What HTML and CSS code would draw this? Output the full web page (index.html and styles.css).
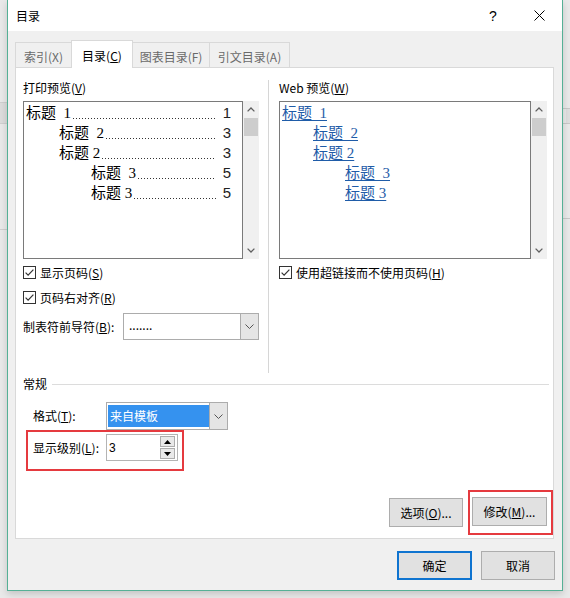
FILE: index.html
```html
<!DOCTYPE html>
<html lang="zh-CN">
<head>
<meta charset="utf-8">
<title>目录</title>
<link rel="stylesheet" href="styles.css">
</head>
<body>
<div class="dialog">
  <div class="titlebar">
    <span class="title">目录</span>
    <span class="cap help">?</span>
    <span class="cap close"><svg width="11" height="11" viewBox="0 0 11 11"><path d="M0.5 0.5L10.5 10.5M10.5 0.5L0.5 10.5" stroke="#000" stroke-width="1" fill="none"/></svg></span>
  </div>
  <div class="body">
    <div class="tabs">
      <div class="tab t1">索引(X)</div>
      <div class="tab t2 active">目录(<u>C</u>)</div>
      <div class="tab t3">图表目录(F)</div>
      <div class="tab t4">引文目录(A)</div>
    </div>
    <div class="panel">
      <div class="top">
        <div class="col left">
          <div class="label">打印预览(<u>V</u>)</div>
          <div class="preview">
            <div class="pbox">
              <div class="toc l1"><span class="t">标题  1</span><span class="dots"></span><span class="pg">1</span></div>
              <div class="toc l2"><span class="t">标题  2</span><span class="dots"></span><span class="pg">3</span></div>
              <div class="toc l2"><span class="t">标题 2</span><span class="dots"></span><span class="pg">3</span></div>
              <div class="toc l3"><span class="t">标题  3</span><span class="dots"></span><span class="pg">5</span></div>
              <div class="toc l3"><span class="t">标题 3</span><span class="dots"></span><span class="pg">5</span></div>
            </div>
            <div class="scroll">
              <div class="arrow"><svg width="8" height="5" viewBox="0 0 8 5"><path d="M0.6 4.4L4 1L7.4 4.4" fill="none" stroke="#606060" stroke-width="1.3"/></svg></div>
              <div class="thumb"></div>
              <div class="track"></div>
              <div class="arrow"><svg width="8" height="5" viewBox="0 0 8 5"><path d="M0.6 0.6L4 4L7.4 0.6" fill="none" stroke="#606060" stroke-width="1.3"/></svg></div>
            </div>
          </div>
          <div class="check first"><svg class="cb" width="13" height="13" viewBox="0 0 13 13"><rect x="0.5" y="0.5" width="12" height="12" fill="#fff" stroke="#333"/><path d="M2.6 6.6L5.1 9.1L10.4 3.6" fill="none" stroke="#333" stroke-width="1.2"/></svg><span>显示页码(<u>S</u>)</span></div>
          <div class="check"><svg class="cb" width="13" height="13" viewBox="0 0 13 13"><rect x="0.5" y="0.5" width="12" height="12" fill="#fff" stroke="#333"/><path d="M2.6 6.6L5.1 9.1L10.4 3.6" fill="none" stroke="#333" stroke-width="1.2"/></svg><span>页码右对齐(<u>R</u>)</span></div>
          <div class="leader">
            <span class="leader-label">制表符前导符(<u>B</u>):</span>
            <div class="combo leader-combo">
              <span class="value">.......</span>
              <span class="drop"><svg width="9" height="5" viewBox="0 0 9 5"><path d="M0.5 0.5L4.5 4.5L8.5 0.5" fill="none" stroke="#555" stroke-width="1"/></svg></span>
            </div>
          </div>
        </div>
        <div class="divider"></div>
        <div class="col right">
          <div class="label">Web 预览(<u>W</u>)</div>
          <div class="preview">
            <div class="pbox web">
              <div class="link l1"><span>标题  1</span></div>
              <div class="link l2"><span>标题  2</span></div>
              <div class="link l2"><span>标题 2</span></div>
              <div class="link l3"><span>标题  3</span></div>
              <div class="link l3"><span>标题 3</span></div>
            </div>
            <div class="scroll">
              <div class="arrow"><svg width="8" height="5" viewBox="0 0 8 5"><path d="M0.6 4.4L4 1L7.4 4.4" fill="none" stroke="#606060" stroke-width="1.3"/></svg></div>
              <div class="thumb"></div>
              <div class="track"></div>
              <div class="arrow"><svg width="8" height="5" viewBox="0 0 8 5"><path d="M0.6 0.6L4 4L7.4 0.6" fill="none" stroke="#606060" stroke-width="1.3"/></svg></div>
            </div>
          </div>
          <div class="check first"><svg class="cb" width="13" height="13" viewBox="0 0 13 13"><rect x="0.5" y="0.5" width="12" height="12" fill="#fff" stroke="#333"/><path d="M2.6 6.6L5.1 9.1L10.4 3.6" fill="none" stroke="#333" stroke-width="1.2"/></svg><span>使用超链接而不使用页码(<u>H</u>)</span></div>
        </div>
      </div>
      <div class="group-head"><span>常规</span><span class="rule"></span></div>
      <div class="field format">
        <span class="field-label">格式(<u>T</u>):</span>
        <div class="combo format-combo">
          <span class="selected">来自模板</span>
          <span class="drop"><svg width="9" height="5" viewBox="0 0 9 5"><path d="M0.5 0.5L4.5 4.5L8.5 0.5" fill="none" stroke="#555" stroke-width="1"/></svg></span>
        </div>
      </div>
      <div class="field level mark">
        <span class="field-label">显示级别(<u>L</u>):</span>
        <div class="spinner">
          <span class="num">3</span>
          <span class="spins">
            <span class="spin"><svg width="7" height="4" viewBox="0 0 7 4"><path d="M0 4L3.5 0L7 4Z" fill="#000"/></svg></span>
            <span class="spin"><svg width="7" height="4" viewBox="0 0 7 4"><path d="M0 0L3.5 4L7 0Z" fill="#000"/></svg></span>
          </span>
        </div>
      </div>
      <div class="actions">
        <div class="btn options">选项(<u>O</u>)...</div>
        <div class="mark modify-wrap"><div class="btn modify">修改(<u>M</u>)...</div></div>
      </div>
    </div>
    <div class="footer">
      <div class="btn ok">确定</div>
      <div class="btn cancel">取消</div>
    </div>
  </div>
</div>
</body>
</html>
```

FILE: styles.css
```css
* { box-sizing: border-box; }
html, body { margin: 0; padding: 0; }
body {
  width: 570px;
  height: 598px;
  overflow: hidden;
  font: 12px/16px "Noto Sans CJK SC", "Noto Sans", sans-serif;
  color: #000;
  background:
    linear-gradient(#cfcfcf, #cfcfcf) 0 102px / 7px 1px no-repeat,
    linear-gradient(#dcdcdc, #dcdcdc) 0 103px / 7px 20px no-repeat,
    linear-gradient(#cfcfcf, #cfcfcf) 0 123px / 7px 1px no-repeat,
    linear-gradient(#cfcfcf, #cfcfcf) 0 229px / 7px 1px no-repeat,
    linear-gradient(#c8c8c8, #c8c8c8) 563px 108px / 7px 1px no-repeat,
    linear-gradient(#dedede, #dedede) 566px 109px / 4px 14px no-repeat,
    linear-gradient(#c8c8c8, #c8c8c8) 563px 123px / 7px 1px no-repeat,
    linear-gradient(#c8c8c8, #c8c8c8) 563px 218px / 7px 1px no-repeat,
    #e9e9e9;
}

.dialog {
  margin-left: 7px;
  width: 556px;
  height: 591px;
  border: 1px solid #55b095;
  border-top: 0;
  background: #f0f0f0;
  box-shadow: 0 3px 7px rgba(0, 0, 0, 0.16);
  display: flex;
  flex-direction: column;
}

.titlebar {
  height: 31px;
  background: #fff;
  display: flex;
  align-items: center;
  padding-left: 8px;
  flex: none;
}
.title { flex: 1; font-size: 12px; }
.cap {
  width: 46px;
  height: 31px;
  display: flex;
  align-items: center;
  justify-content: center;
}
.help { font: 14px/16px "Liberation Sans", sans-serif; }

.body {
  flex: 1;
  padding: 9px 8px 10px 7px;
  display: flex;
  flex-direction: column;
}

.tabs {
  height: 27px;
  display: flex;
  align-items: flex-end;
  flex: none;
}
.tab {
  height: 25px;
  border: 1px solid #d9d9d9;
  border-bottom: 0;
  margin-left: -1px;
  padding-top: 3px;
  display: flex;
  align-items: center;
  justify-content: center;
  color: #6a6a6a;
  background: #f0f0f0;
}
.t1 { width: 57px; margin-left: 0; }
.t2 { width: 62px; }
.t3 { width: 78px; }
.t4 { width: 81px; }
.tab.active {
  height: 28px;
  background: #fff;
  color: #000;
  margin-bottom: -1px;
  position: relative;
  z-index: 1;
}

.panel {
  height: 472px;
  border: 1px solid #d9d9d9;
  background: #fff;
  display: flex;
  flex-direction: column;
  flex: none;
}

.top {
  height: 308px;
  display: flex;
  padding-left: 7px;
  flex: none;
}
.col { padding-top: 12px; }
.col.left { width: 236px; }
.col.right { width: 268px; }
.divider {
  width: 1px;
  background: #d6d6d6;
  margin: 12px 10px 3px 9px;
}

.label { height: 16px; margin-bottom: 5px; }

.preview { display: flex; height: 158px; }
.pbox {
  flex: 1;
  border: 1px solid #7a7a7a;
  background: #fff;
  padding-top: 1px;
}
.scroll {
  width: 16px;
  background: #f0f0f0;
  display: flex;
  flex-direction: column;
  align-items: center;
}
.arrow {
  height: 17px;
  width: 16px;
  display: flex;
  align-items: center;
  justify-content: center;
}
.thumb { width: 14px; height: 18px; background: #cdcdcd; }
.track { flex: 1; }

.toc {
  display: flex;
  height: 20px;
  line-height: 20px;
  font-size: 15px;
  font-family: "Liberation Serif", "Noto Sans CJK SC", serif;
  padding-right: 11px;
  white-space: pre;
}
.toc .t { font-family: "Liberation Serif", "Noto Sans CJK SC", serif; }
.l1 { padding-left: 2px; }
.l2 { padding-left: 35px; }
.l3 { padding-left: 67px; }
.dots {
  flex: 1;
  margin-left: 2px;
  background-image: linear-gradient(to right, #333 1px, transparent 1px);
  background-size: 3px 1px;
  background-repeat: repeat-x;
  background-position: 0 15px;
}
.pg {
  width: 15px;
  text-align: right;
  font-family: "Liberation Sans", sans-serif;
  font-weight: 300;
  color: #222;
}

.web .link {
  height: 20px;
  line-height: 20px;
  font-size: 15px;
  font-family: "Liberation Serif", "Noto Sans CJK SC", serif;
  white-space: pre;
}
.web .link span {
  color: #1f5ca8;
  text-decoration: underline;
  text-underline-offset: 2px;
}
.web .l1 { padding-left: 2px; }
.web .l2 { padding-left: 33px; }
.web .l3 { padding-left: 65px; }

.check {
  height: 25px;
  display: flex;
  align-items: center;
  gap: 4px;
}
.check.first { margin-top: 1px; }
.cb { flex: none; }

.leader {
  margin-top: 3px;
  height: 27px;
  display: flex;
  align-items: center;
}
.leader-label { width: 100px; }

.combo {
  display: flex;
  border: 1px solid #acacac;
  background: #fff;
}
.leader-combo { width: 136px; height: 27px; }
.combo .value { flex: 1; padding-left: 5px; line-height: 22px; }
.drop {
  width: 18px;
  background: #e5e5e5;
  border-left: 1px solid #acacac;
  display: flex;
  align-items: center;
  justify-content: center;
}

.group-head {
  height: 16px;
  display: flex;
  align-items: center;
  padding-left: 7px;
  margin-top: 0;
  flex: none;
}
.rule {
  flex: 1;
  height: 1px;
  background: #dcdcdc;
  margin: 0 4px 0 5px;
}

.field {
  display: flex;
  align-items: center;
  flex: none;
}
.format {
  margin-top: 10px;
  height: 28px;
  padding-left: 17px;
}
.field-label { width: 73px; }
.format-combo { width: 122px; height: 28px; }
.selected {
  flex: 1;
  margin: 2px 0 2px 1px;
  background: #3592ef;
  color: #fff;
  padding-left: 2px;
  line-height: 22px;
  font-size: 12px;
}

.mark { border: 2px solid #e53a3f; }
.level {
  margin-left: 10px;
  width: 158px;
  height: 41px;
  padding: 2px 4px 8px 5px;
}
.spinner {
  width: 72px;
  height: 27px;
  border: 1px solid #b4b4b4;
  display: flex;
  align-items: center;
}
.num { flex: 1; padding-left: 2px; font-family: "Liberation Sans", sans-serif; }
.spins {
  display: flex;
  flex-direction: column;
  gap: 1px;
  margin-right: 2px;
}
.spin {
  width: 15px;
  height: 11px;
  border: 1px solid #adadad;
  background: #e9e9e9;
  display: flex;
  align-items: center;
  justify-content: center;
}

.actions {
  margin-top: 19px;
  display: flex;
  justify-content: flex-end;
  align-items: center;
  flex: none;
}
.btn {
  height: 29px;
  border: 1px solid #adadad;
  background: #e1e1e1;
  display: flex;
  align-items: center;
  justify-content: center;
}
.options { width: 74px; margin-right: 5px; }
.modify-wrap { padding: 5px 4px 7px 2px; }
.modify { width: 75px; }

.footer {
  margin-top: 12px;
  margin-right: -1px;
  display: flex;
  justify-content: flex-end;
  gap: 9px;
  flex: none;
}
.ok { width: 75px; border: 2px solid #0f74d0; }
.cancel { width: 74px; }
```
